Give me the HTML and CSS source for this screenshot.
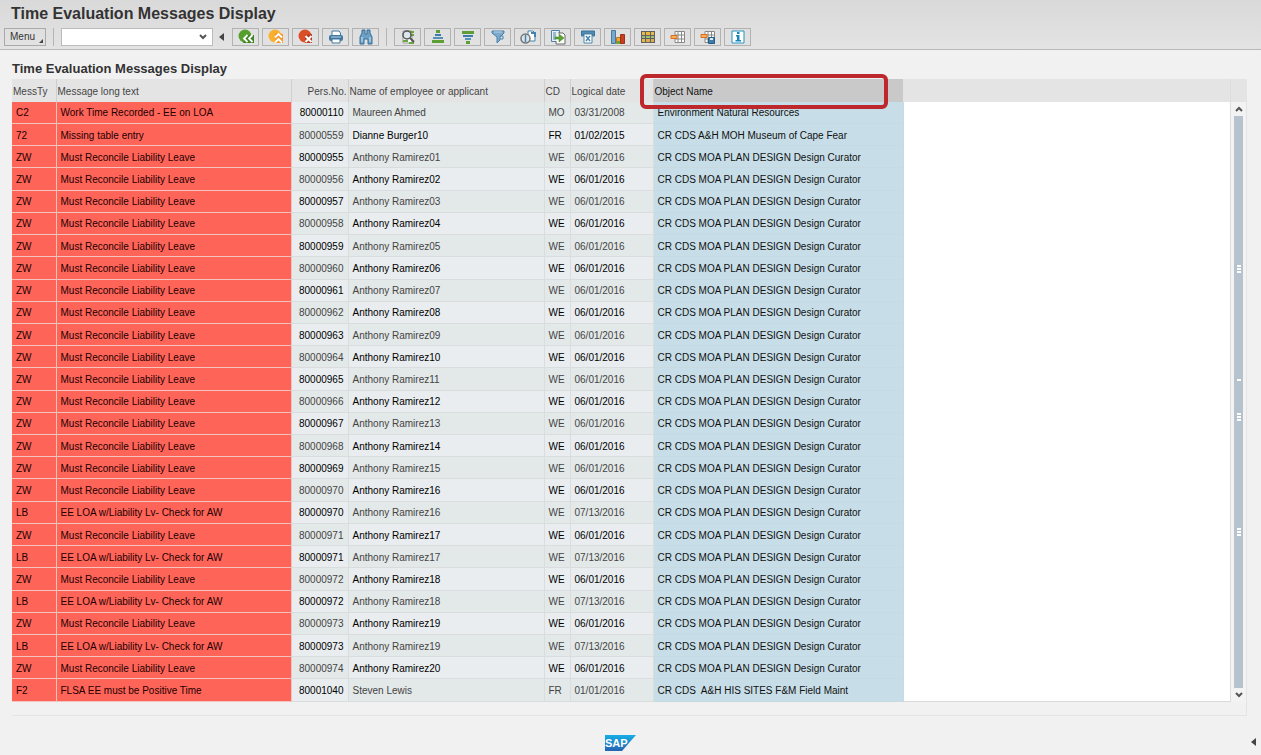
FILE: index.html
```html
<!DOCTYPE html>
<html lang="en">
<head>
    <meta charset="UTF-8"/>
    <title>Time Evaluation Messages Display</title>
    <link rel="stylesheet" href="styles.css">
</head>
<body>
<header>
    <h1>Time Evaluation Messages Display</h1>
    <div class="toolbar">
        <button class="menu-button">Menu</button>
        <span class="separator"></span>
        <div class="command">
            <input type="text" id="command" aria-label="Command"/>
            <button aria-label="Command history">
                <svg width="10" height="8" viewBox="0 0 10 8"><path d="M2 2l3 3 3-3" fill="none" stroke="#555" stroke-width="2"/></svg>
            </button>
        </div>
        <button class="collapse" aria-label="Hide command field"></button>
        <div class="group">
            <button class="tool" aria-label="Back">
                <svg viewBox="0 0 16 16"><circle cx="7" cy="7" r="6.5" fill="#55a02c"/><path d="M9 6h7v8H5z" fill="#3f8423"/><path d="M9.5 6L6 9.5 9.5 13M14.5 6L11 9.5l3.5 3.5" fill="none" stroke="#fff" stroke-width="1.8"/></svg>
            </button>
            <button class="tool" aria-label="Exit">
                <svg viewBox="0 0 16 16"><circle cx="7" cy="7" r="6.5" fill="#fbb02d"/><path d="M7 4l8 1v9H7z" fill="#f0992a"/><path d="M7 8.5L10.5 5 14 8.5M7 13.5l3.500-3.500 3.500 3.500" fill="none" stroke="#fff" stroke-width="1.8"/></svg>
            </button>
            <button class="tool" aria-label="Cancel">
                <svg viewBox="0 0 16 16"><circle cx="7" cy="7" r="6.5" fill="#da4f28"/><path d="M7 6l7-1v9H7z" fill="#b93a1c"/><path d="M7.500 7l6 6M13.500 7l-6 6" fill="none" stroke="#fff" stroke-width="2"/></svg>
            </button>
            <button class="tool" aria-label="Print">
                <svg viewBox="0 0 16 16"><path d="M4 6V2h7l1.500 2v2" fill="#fff" stroke="#41789f"/><rect x="1" y="6" width="14" height="6" rx="2" fill="#41789f"/><path d="M3 8h10" stroke="#b9d6e8"/><path d="M4 10h8v4H4z" fill="#fff" stroke="#41789f"/></svg>
            </button>
            <button class="tool" aria-label="Find">
                <svg viewBox="0 0 16 16"><path d="M4 1h3v4h2V1h3v3l2 4v7h-4v-5H6v5H2V8l2-4z" fill="#6e9fc4" stroke="#356f9c"/><path d="M4 8v5M12 8v5" stroke="#d5e6f1"/></svg>
            </button>
        </div>
        <span class="separator"></span>
        <div class="group">
            <button class="tool" aria-label="Details">
                <svg viewBox="0 0 16 16"><path d="M3 2h9v12H3z" fill="#fff" stroke="#999"/><path d="M10 3h4M11 6h3M3 12h5M9 14h5" stroke="#69a53a" stroke-width="2"/><circle cx="7" cy="6" r="4" fill="#dbe7ed" stroke="#555" stroke-width="1.5"/><path d="M10 9l4 4" stroke="#555" stroke-width="2"/></svg>
            </button>
            <button class="tool" aria-label="Sort ascending">
                <svg viewBox="0 0 16 16"><path d="M6 1h4v3H6zM2 11h12v3H2z" fill="#5d9f35"/><path d="M5 5h6v2H5z" fill="#3e7cab"/><path d="M3 8h10v2H3z" fill="#5590b8"/></svg>
            </button>
            <button class="tool" aria-label="Sort descending">
                <svg viewBox="0 0 16 16"><path d="M2 2h12v3H2zM6 12h4v3H6z" fill="#5d9f35"/><path d="M3 6h10v2H3z" fill="#3e7cab"/><path d="M5 9h6v2H5z" fill="#5590b8"/></svg>
            </button>
            <button class="tool" aria-label="Set filter">
                <svg viewBox="0 0 16 16"><path d="M2 2h12v2l-4 4v3l-3 3V8L2 4z" fill="#7ba9cc" stroke="#4c83ad"/><path d="M4 3h8" stroke="#bdd6e7"/><path d="M10 7h3v3h-3" fill="none" stroke="#4c83ad"/></svg>
            </button>
            <button class="tool" aria-label="Change view">
                <svg viewBox="0 0 16 16"><path d="M8 2h5l2 2v8H8z" fill="#fff" stroke="#4583ad"/><path d="M11 4h4v4" fill="none" stroke="#4583ad" stroke-width="2"/><circle cx="5.5" cy="9.5" r="4.5" fill="#dce6eb" stroke="#777" stroke-width="1.5"/><path d="M5.5 6v7" stroke="#4583ad" stroke-width="1.5"/></svg>
            </button>
            <button class="tool" aria-label="Export">
                <svg viewBox="0 0 16 16"><path d="M1.5 1.5h8v11h-8z" fill="#e7eff4" stroke="#4f83a8"/><path d="M3 4h3M3 6h3M3 8h3M3 10h3" stroke="#4f83a8"/><path d="M8 4h5l2 2v9H6v-3" fill="#fff" stroke="#666"/><path d="M5 8h4V5l5 4-5 4v-3H5z" fill="#5aa432" stroke="#3d7d24" stroke-width=".5"/></svg>
            </button>
            <button class="tool" aria-label="Word processing">
                <svg viewBox="0 0 16 16"><path d="M1.5 2h13v5h-2V5h-9v2h-2z" fill="#538bb1" stroke="#36739d"/><path d="M4 5h8v9H4z" fill="#fff" stroke="#4b85ad"/><path d="M6 7l4 5M10 7l-4 5" stroke="#4b85ad" stroke-width="1.5"/></svg>
            </button>
            <button class="tool" aria-label="Graphic">
                <svg viewBox="0 0 16 16"><path d="M1.5 1.5h4v13h-4z" fill="#78a8ca" stroke="#46799d"/><path d="M6.5 8.5h4v6h-4z" fill="#f1a72d" stroke="#b87821"/><path d="M10.5 5.5h4v9h-4z" fill="#c83e20" stroke="#9d3019"/><path d="M7 12h3v3H7z" fill="#69a53a"/></svg>
            </button>
            <button class="tool" aria-label="Choose layout">
                <svg viewBox="0 0 16 16"><path d="M1 2h14v12H1z" fill="#606060"/><path d="M2 3h3v3H2zM6 3h4v3H6zM11 3h3v3h-3zM2 10h3v3H2z" fill="#e8b84a"/><path d="M2 7h3v2H2zM6 7h4v2H6zM11 7h3v2h-3z" fill="#9ebf78"/><path d="M6 10h4v3H6zM11 10h3v3h-3z" fill="#d9ad53"/></svg>
            </button>
            <button class="tool" aria-label="Change layout">
                <svg viewBox="0 0 16 16"><path d="M5 2.5h9.5v11H5zM5 6h9M5 10h9M8 2v11M11.5 2v11" fill="#fff" stroke="#888"/><path d="M1 6.5h6v3H1z" fill="#f5b255" stroke="#db6d23"/></svg>
            </button>
            <button class="tool" aria-label="Save layout">
                <svg viewBox="0 0 16 16"><path d="M5 2.5h9.5v11H5zM5 6h9M5 10h9M8 2v11M11.5 2v11" fill="#fff" stroke="#888"/><path d="M1 5.5h6v3H1z" fill="#f5b255" stroke="#db6d23"/><path d="M8.5 8.5h6v6h-6z" fill="#3f7ca6" stroke="#255f88"/><path d="M10 9h3v2h-3z" fill="#dceaf3"/></svg>
            </button>
            <button class="tool" aria-label="Information">
                <svg viewBox="0 0 16 16"><path d="M2 2h12v12H2z" fill="#fff" stroke="#2793bd"/><path d="M7 3h2.5v2H7zM6 6h3.5v5H11v1.5H5.5V11H7V7.5H6z" fill="#168abb"/></svg>
            </button>
        </div>
    </div>
</header>

<main>
    <h2>Time Evaluation Messages Display</h2>
    <div class="grid-panel">
        <table>
            <colgroup>
                <col class="col-type"/>
                <col class="col-text"/>
                <col class="col-pers"/>
                <col class="col-name"/>
                <col class="col-cd"/>
                <col class="col-date"/>
                <col class="col-object"/>
                <col/>
            </colgroup>
            <thead>
            <tr>
                <th>MessTy</th>
                <th>Message long text</th>
                <th class="pers">Pers.No.</th>
                <th>Name of employee or applicant</th>
                <th>CD</th>
                <th>Logical date</th>
                <th class="object">Object Name<span class="highlight"></span></th>
                <th class="filler"></th>
            </tr>
            </thead>
            <tbody id="messages"></tbody>
        </table>
        <div class="scrollbar">
            <button aria-label="Scroll up">
                <svg width="8" height="6" viewBox="0 0 8 6"><path d="M1 5l3-3 3 3" fill="none" stroke="#555" stroke-width="2"/></svg>
            </button>
            <div class="thumb">
                <span class="grip"></span>
                <span class="grip single"></span>
                <span class="grip third"></span>
                <span class="grip fourth"></span>
            </div>
            <button aria-label="Scroll down">
                <svg width="8" height="6" viewBox="0 0 8 6"><path d="M1 1l3 3 3-3" fill="none" stroke="#555" stroke-width="2"/></svg>
            </button>
        </div>
    </div>
</main>

<footer>
    <svg class="logo" width="31" height="16" viewBox="0 0 31 16" role="img" aria-label="SAP">
        <defs>
            <linearGradient id="sap" x1="0" y1="0" x2="0" y2="1">
                <stop offset="0" stop-color="#16aee5"/>
                <stop offset="1" stop-color="#2463b2"/>
            </linearGradient>
        </defs>
        <path d="M0 0h31L17 16H0z" fill="url(#sap)"/>
        <text x="0" y="12">SAP</text>
    </svg>
    <button class="collapse" aria-label="Show status details"></button>
</footer>

<script>
    const leave = "Must Reconcile Liability Leave";
    const check = "EE LOA w/Liability Lv- Check for AW";
    const curator = "CR CDS MOA PLAN DESIGN Design Curator";

    const rows = [
        ["C2", "Work Time Recorded - EE on LOA", "80000110", "Maureen Ahmed", "MO", "03/31/2008", "Environment Natural Resources"],
        ["72", "Missing table entry", "80000559", "Dianne Burger10", "FR", "01/02/2015", "CR CDS A&H MOH Museum of Cape Fear"]
    ];

    // Ramirez01 - Ramirez20, the later ones also have an LB message
    for (let i = 1; i <= 20; i++) {
        const pers = String(80000954 + i);
        const name = "Anthony Ramirez" + String(i).padStart(2, "0");
        rows.push(["ZW", leave, pers, name, "WE", "06/01/2016", curator]);
        if (i >= 16 && i <= 19) {
            rows.push(["LB", check, pers, name, "WE", "07/13/2016", curator]);
        }
    }
    rows.push(["F2", "FLSA EE must be Positive Time", "80001040", "Steven Lewis", "FR", "01/01/2016", "CR CDS  A&H HIS SITES F&M Field Maint"]);

    const classes = ["error", "error", "pers", "", "", "", "object"];
    const body = document.getElementById("messages");
    rows.forEach(row => {
        const tr = body.insertRow();
        row.forEach((value, i) => {
            const td = tr.insertCell();
            td.textContent = value;
            if (classes[i]) td.className = classes[i];
        });
        tr.insertCell().className = "filler";
    });
</script>
</body>
</html>
```
FILE: styles.css
```css
* {
    box-sizing: border-box;
}

body {
    margin: 0;
    min-height: 100vh;
    display: flex;
    flex-direction: column;
    font-family: "Liberation Sans", Arial, sans-serif;
    font-size: 10px;
    color: #333;
    background: #f1f1f1;
}

button, input {
    font: inherit;
    color: inherit;
    margin: 0;
    padding: 0;
    border: 0;
    background: none;
}

header {
    background: linear-gradient(#d9d9d9, #e3e3e3);
    border-bottom: 1px solid #b8b8b8;
}

h1 {
    margin: 0;
    padding: 2px 11px 0;
    font-size: 16px;
    line-height: 23px;
}

.toolbar {
    display: flex;
    align-items: center;
    height: 24px;
    padding: 0 4px;
}

.menu-button {
    position: relative;
    width: 42px;
    height: 18px;
    padding: 0 0 1px 5px;
    border: 1px solid #aaa;
    text-align: left;
}

.menu-button::after {
    content: "";
    position: absolute;
    right: 2px;
    bottom: 2px;
    border-left: 4px solid transparent;
    border-bottom: 4px solid #444;
}

.separator {
    width: 1px;
    height: 18px;
    margin: 0 7px;
    background: #b5b5b5;
}

.command {
    display: flex;
    width: 152px;
    height: 18px;
    border: 1px solid #bbb;
    background: #fff;
}

.command input {
    flex: 1;
    min-width: 0;
    padding-left: 4px;
}

.command button {
    width: 18px;
}

.collapse {
    width: 5px;
    height: 8px;
    border: 4px solid transparent;
    border-left: 0;
    border-right: 5px solid #444;
}

.toolbar .collapse {
    margin: 0 8px 0 6px;
}

.group {
    display: flex;
    gap: 3px;
}

.tool {
    display: flex;
    align-items: center;
    justify-content: center;
    width: 27px;
    height: 18px;
    border: 1px solid #b2b2b2;
}

.tool svg {
    width: 16px;
    height: 16px;
}

main {
    flex: 1;
    display: flex;
    flex-direction: column;
    padding: 9px 14px 0 12px;
}

h2 {
    margin: 0;
    font-size: 13px;
    line-height: 20px;
}

.grid-panel {
    flex: 1;
    display: grid;
    grid-template-columns: 1fr 16px;
    padding-bottom: 13px;
    border: 1px solid #e4e4e4;
    border-width: 0 1px 1px 0;
}

table {
    width: 100%;
    height: 100%;
    table-layout: fixed;
    border-collapse: collapse;
    border-bottom: 1px solid #d9d9d9;
    background: #fff;
}

.col-type { width: 44px; }
.col-text { width: 235px; }
.col-pers { width: 57px; }
.col-name { width: 196px; }
.col-cd { width: 26px; }
.col-date { width: 83px; }
.col-object { width: 250px; }

th {
    height: 23px;
    padding: 2px 1px 0;
    font-weight: normal;
    text-align: left;
    color: #444;
    white-space: nowrap;
    background: #e4e4e4;
    border-right: 1px solid #cfcfcf;
}

td {
    padding: 2px 4px 0;
    line-height: 12px;
    white-space: pre;
    color: #444;
    background: #e3e8e8;
    border-right: 1px solid #d9dddd;
    border-bottom: 1px solid #d9dddd;
}

tr:nth-child(even) td {
    color: #000;
    background: #e9edef;
}

td.pers {
    color: #000;
    background: #e9edef;
}

tr:nth-child(even) td.pers {
    color: #444;
    background: #e3e8e8;
}

.pers {
    text-align: right;
}

tbody .error, tbody tr:nth-child(even) .error {
    color: #200;
    background: #ff6459;
    border-color: #f5c3be;
}

th.object {
    position: relative;
    color: #111;
    background: #c9c9c9;
    border-right: 0;
}

tbody .object, tbody tr:nth-child(even) .object {
    color: #111;
    background: #c7dee8;
    border-color: #c7dae2;
}

tbody .filler, tbody tr:nth-child(even) .filler {
    background: #fff;
    border: 0;
}

th.filler {
    border-right: 0;
}

.highlight {
    position: absolute;
    top: -5px;
    left: -14px;
    width: 248px;
    height: 35px;
    border: 4px solid #bd282d;
    border-radius: 6px;
}

.scrollbar {
    display: flex;
    flex-direction: column;
    align-items: center;
    padding-top: 23px;
    background: linear-gradient(#e4e4e4 23px, #f3f3f3 23px);
    border-left: 1px solid #ddd;
}

.scrollbar button {
    display: flex;
    align-items: center;
    justify-content: center;
    width: 100%;
    height: 14px;
}

.thumb {
    position: relative;
    flex: 1;
    width: 9px;
    background: #b6c2ce;
}

/* small white marks on the thumb */
.grip {
    position: absolute;
    top: 26%;
    left: 3px;
    width: 4px;
    height: 8px;
    background: repeating-linear-gradient(#fff 0 2px, transparent 2px 3px);
}

.grip.single {
    top: 46%;
    height: 2px;
}

.grip.third {
    top: 52%;
}

.grip.fourth {
    top: 72%;
}

footer {
    position: relative;
    display: flex;
    align-items: center;
    justify-content: center;
    height: 39px;
    padding: 14px 20px 0 0;
}

.logo text {
    font-size: 11px;
    font-weight: bold;
    fill: #fff;
}

footer .collapse {
    position: absolute;
    right: 5px;
    bottom: 9px;
}
```
